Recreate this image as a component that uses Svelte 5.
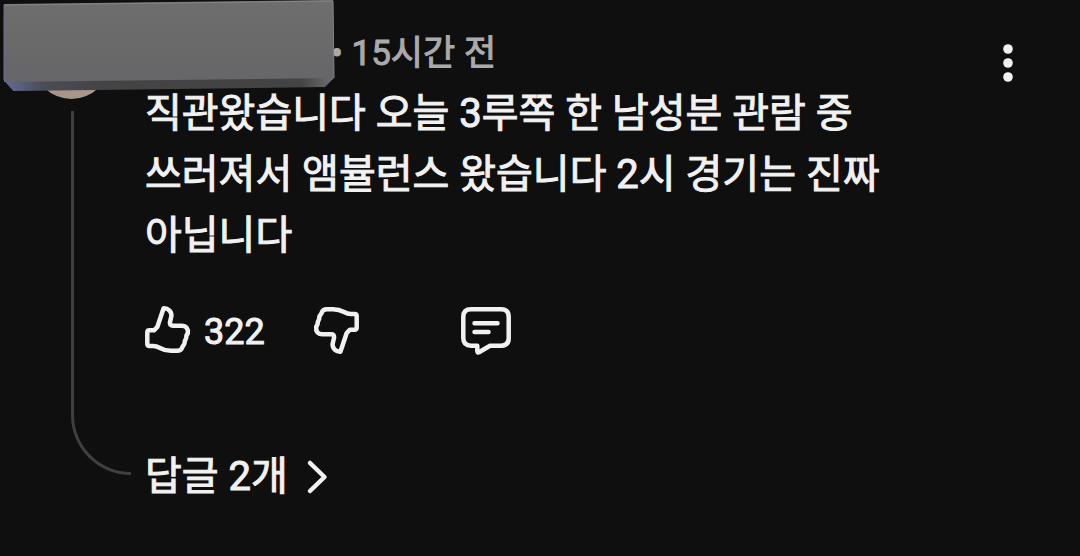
<script>
	let { age = '15시간 전', likes = 322, replies = 2 } = $props();

	const body = '직관왔습니다 오늘 3루쪽 한 남성분 관람 중 쓰러져서 앰뷸런스 왔습니다 2시 경기는 진짜 아닙니다';

	const thumb =
		'M4.300 28.500Q4.300 26.300 6.500 26.300H11L14.300 23L20.600 4.300C25 4 28.700 7.500 28.400 12L26.900 18.500Q26.900 21.700 30 21.700H38.500C43.500 21.700 45.300 25 44.800 29C44.500 30.500 43.300 31 43.300 32.500C43.800 35 41.500 36 41.700 38C42 41 40 41 39.200 43.500C38.500 46 36.500 46.800 34 46.800H28C23 46.800 20.500 46 17 44Q13.500 42 10 42H6.500Q4.300 42 4.300 39.800Z';
</script>

<article class="comment">
	<div class="side">
		<div class="avatar"></div>
		<div class="thread"></div>
	</div>

	<div class="content">
		<header>
			<span class="meta">• {age}</span>
		</header>

		<p class="body">{body}</p>

		<div class="actions">
			<button class="like" aria-label="좋아요 {likes}">
				<svg class="icon" viewBox="0 0 50 52">
					<path d={thumb} />
				</svg>
				<span class="count">{likes}</span>
			</button>
			<button class="dislike" aria-label="싫어요">
				<svg class="icon" viewBox="0 0 50 52">
					<path d={thumb} transform="rotate(180 25 26)" />
				</svg>
			</button>
			<button class="reply" aria-label="답글 달기">
				<svg class="icon wide" viewBox="0 0 54 52">
					<path
						d="M12 5.300H42Q49.700 5.300 49.700 13V34Q49.700 41.700 42 41.700H31L20 48.200Q18.300 49 18.300 47V41.700H12Q4.300 41.700 4.300 34V13Q4.300 5.300 12 5.300Z"
					/>
					<path d="M15.500 19.300H38.500M15.500 28H29.500" />
				</svg>
			</button>
		</div>

		<button class="replies">
			<span>답글 {replies}개</span>
			<svg class="chevron" viewBox="0 0 22 36">
				<path d="M4 4L18.500 18L4 32" />
			</svg>
		</button>
	</div>

	<button class="menu" aria-label="더보기">
		<svg viewBox="0 0 12 40">
			<circle cx="6" cy="6" r="4.800" />
			<circle cx="6" cy="20" r="4.800" />
			<circle cx="6" cy="34" r="4.800" />
		</svg>
	</button>

	<!-- block that hides the author -->
	<svg class="cover" viewBox="0 0 336 92" aria-hidden="true">
		<defs>
			<linearGradient id="face" x1="0" y1="0" x2="0" y2="1">
				<stop offset="0" stop-color="#6e6e6e" />
				<stop offset="1" stop-color="#666668" />
			</linearGradient>
			<linearGradient id="edge" x1="0" y1="0" x2="1" y2="0">
				<stop offset="0" stop-color="#626b98" />
				<stop offset="0.120" stop-color="#4b4c54" />
				<stop offset="0.300" stop-color="#444446" />
				<stop offset="0.900" stop-color="#434344" />
				<stop offset="1" stop-color="#707070" />
			</linearGradient>
		</defs>
		<path d="M4 80L14 91L325 87L334 78L330 76L6 79Z" fill="url(#edge)" />
		<path d="M4 4L333 0L334 78L4 82Z" fill="url(#face)" />
		<path d="M4 5L333 1" stroke="#858689" />
		<path d="M4 5V80L14 91" fill="none" stroke="#66719c" />
		<path d="M333 1L334 78" stroke="#858585" />
	</svg>
</article>

<style>
	:global(body) {
		margin: 0;
		background: #0f0f0f;
	}

	.comment {
		position: relative;
		display: flex;
		padding: 22px 55px 58px 0;
		color: #f1f1f1;
		font-family: Roboto, 'Noto Sans CJK KR', sans-serif;
		font-size: 40px;
		font-weight: 400;
		-webkit-text-stroke: 1px currentColor;
	}

	.side {
		display: flex;
		flex-direction: column;
		flex: none;
		width: 145px;
	}

	.avatar {
		width: 77px;
		height: 77px;
		margin-left: 33px;
		border-radius: 50%;
		background: #a8968a;
	}

	.thread {
		flex: 1;
		width: 57px;
		margin: 12px 0 25px 71px;
		border: solid #3f3f3f;
		border-width: 0 0 3px 3px;
		border-bottom-left-radius: 60px;
	}

	.content {
		flex: 1;
		min-width: 0;
	}

	header {
		padding-left: 186px;
		line-height: 59px;
	}

	.meta {
		color: #aaa;
		font-size: 35px;
	}

	.body {
		max-width: 760px;
		margin: 0;
		line-height: 61px;
		word-break: keep-all;
	}

	button {
		display: flex;
		align-items: center;
		padding: 0;
		border: none;
		background: none;
		color: inherit;
		font: inherit;
		cursor: pointer;
	}

	.actions {
		display: flex;
		align-items: flex-start;
		margin: 38px 0 96px -2px;
	}

	.like {
		align-items: flex-start;
		gap: 11px;
		font-size: 36px;
		line-height: 52px;
	}

	.count {
		padding-top: 2px;
	}

	.dislike {
		margin-left: 46px;
	}

	.reply {
		margin-left: 98px;
	}

	svg {
		display: block;
	}

	.icon,
	.chevron {
		fill: none;
		stroke: currentColor;
		stroke-width: 4.5;
		stroke-linecap: round;
		stroke-linejoin: round;
	}

	.icon {
		width: 50px;
		height: 52px;
	}

	.wide {
		width: 54px;
	}

	.replies {
		gap: 18px;
		line-height: 46px;
	}

	.chevron {
		width: 22px;
		height: 36px;
	}

	.menu {
		align-self: flex-start;
		margin-top: 21px;
		padding: 0 11px 0 0;
	}

	.menu svg {
		width: 12px;
		height: 40px;
		fill: currentColor;
	}

	.cover {
		position: absolute;
		top: 0;
		left: 0;
		width: 336px;
		height: 92px;
	}
</style>
